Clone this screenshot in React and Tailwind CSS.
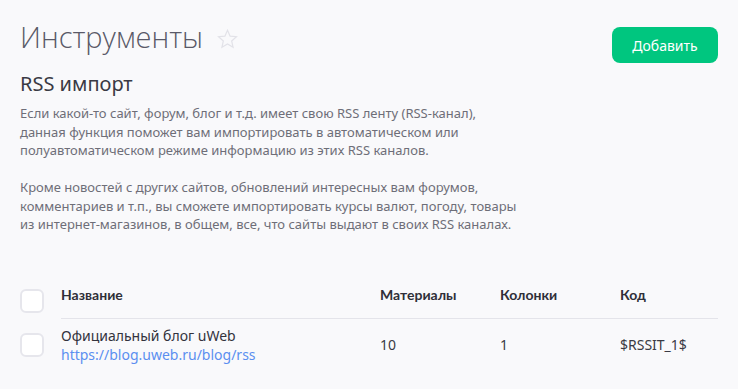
const rows = [
  {
    name: "Официальный блог uWeb",
    url: "https://blog.uweb.ru/blog/rss",
    materials: "10",
    columns: "1",
    code: "$RSSIT_1$",
  },
];

const Checkbox = () => {
  return <div className="h-6 w-6 shrink-0 rounded-md border-2 border-[#e6e6ec] bg-white" />;
};

const App = () => {
  return (
    <div className="min-h-screen w-[738px] bg-[#f9f9fb] px-5 pt-[21px] font-['Noto_Sans',sans-serif] text-[#3a3a44]">
      <div className="flex items-start justify-between">
        <div className="flex items-center gap-[14px]">
          <h1 className="font-['Open_Sans',sans-serif] text-[29px] font-light leading-[32px] text-[#595968]">
            Инструменты
          </h1>
          <svg className="mt-[3px]" width="21" height="20" viewBox="0 0 24 23" fill="none" stroke="#e2e2e8" strokeWidth="1.4">
            <path d="M12 1.5l3 6.7 7.3.7-5.5 4.9 1.6 7.2L12 17.3 5.6 21l1.6-7.2L1.7 8.9 9 8.2z" />
          </svg>
        </div>
        <button className="mt-[6px] h-9 w-[106px] rounded-lg bg-[#00c67f] text-[14px] text-white">
          Добавить
        </button>
      </div>

      <h2 className="mt-[7px] text-[20px] leading-[28px] text-[#3a3a44]">RSS импорт</h2>
      <p className="mt-[6px] text-[13px] leading-[18.5px] text-[#6e6e78]">
        Если какой-то сайт, форум, блог и т.д. имеет свою RSS ленту (RSS-канал),
        <br />
        данная функция поможет вам импортировать в автоматическом или
        <br />
        полуавтоматическом режиме информацию из этих RSS каналов.
        <br />
        <br />
        Кроме новостей с других сайтов, обновлений интересных вам форумов,
        <br />
        комментариев и т.п., вы сможете импортировать курсы валют, погоду, товары
        <br />
        из интернет-магазинов, в общем, все, что сайты выдают в своих RSS каналах.
      </p>

      <div className="mt-[49px] w-[698px]">
        <div className="flex items-center">
          <Checkbox />
          <div className="ml-[17px] grid flex-1 grid-cols-[319px_120px_120px_1fr] border-b border-[#e4e4ea] pb-[13px] pt-[1px] font-['Lato',sans-serif] text-[14px] font-bold text-[#2f2f38]">
            <div>Название</div>
            <div>Материалы</div>
            <div>Колонки</div>
            <div>Код</div>
          </div>
        </div>
        {rows.map((row) => (
          <div key={row.code} className="flex items-center pt-[7px]">
            <Checkbox />
            <div className="ml-[17px] grid flex-1 grid-cols-[319px_120px_120px_1fr] items-center text-[14px] leading-[19px]">
              <div>
                <div className="text-[#33333d]">{row.name}</div>
                <div className="text-[#5b8ff0]">{row.url}</div>
              </div>
              <div>{row.materials}</div>
              <div>{row.columns}</div>
              <div>{row.code}</div>
            </div>
          </div>
        ))}
      </div>
    </div>
  );
};

export default App;
